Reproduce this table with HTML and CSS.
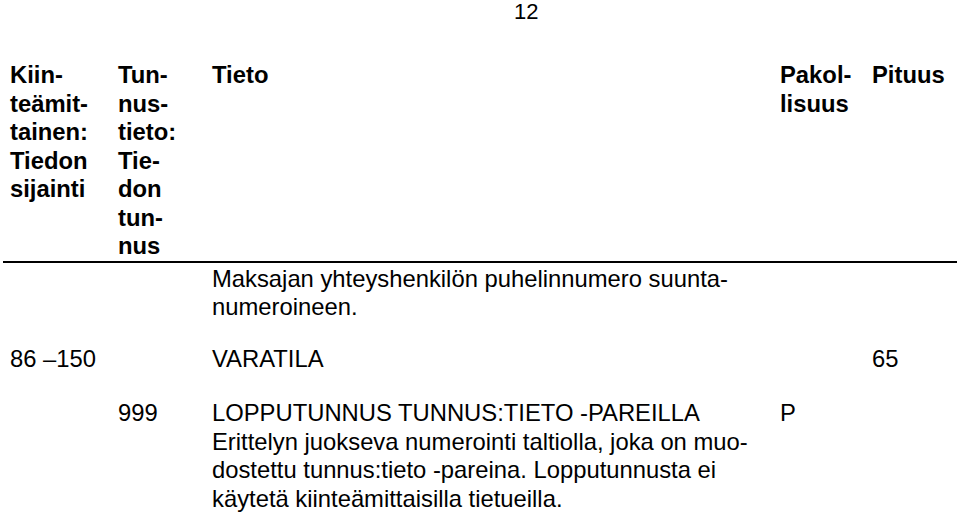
FILE: index.html
```html
<!DOCTYPE html>
<html lang="fi">
<head>
<meta charset="utf-8">
<title>Tietue</title>
<link rel="stylesheet" href="styles.css">
</head>
<body>
<div class="page">
  <div class="pagenum">12</div>
  <div class="table">
    <div class="row head">
      <div class="c1">Kiin-<br>teämit-<br>tainen:<br>Tiedon<br>sijainti</div>
      <div class="c2">Tun-<br>nus-<br>tieto:<br>Tie-<br>don<br>tun-<br>nus</div>
      <div class="c3">Tieto</div>
      <div class="c4">Pakol-<br>lisuus</div>
      <div class="c5">Pituus</div>
    </div>
    <div class="row r-desc">
      <div class="c1"></div>
      <div class="c2"></div>
      <div class="c3">Maksajan yhteyshenkilön puhelinnumero suunta-<br>numeroineen.</div>
      <div class="c4"></div>
      <div class="c5"></div>
    </div>
    <div class="row r-vara">
      <div class="c1">86 –150</div>
      <div class="c2"></div>
      <div class="c3">VARATILA</div>
      <div class="c4"></div>
      <div class="c5">65</div>
    </div>
    <div class="row r-end">
      <div class="c1"></div>
      <div class="c2">999</div>
      <div class="c3">LOPPUTUNNUS TUNNUS:TIETO -PAREILLA<br>Erittelyn juokseva numerointi taltiolla, joka on muo-<br>dostettu tunnus:tieto -pareina. Lopputunnusta ei<br>käytetä kiinteämittaisilla tietueilla.</div>
      <div class="c4">P</div>
      <div class="c5"></div>
    </div>
  </div>
</div>
</body>
</html>
```

FILE: styles.css
```css
html, body {
  margin: 0;
  padding: 0;
  background: #ffffff;
}

.page {
  width: 959px;
  height: 513px;
  overflow: hidden;
  font-family: "Liberation Sans", Arial, sans-serif;
  font-size: 23.8px;
  line-height: 28.5px;
  color: #000000;
}

.pagenum {
  font-size: 22px;
  line-height: 24px;
  padding-left: 514px;
}

.table {
  margin-top: 37px;
  margin-left: 3px;
  width: 954px;
}

.row {
  display: grid;
  grid-template-columns: 108px 94px 568px 92px 1fr;
  padding-left: 7px;
}

.head {
  font-weight: bold;
  border-bottom: 2px solid #000000;
}

.r-desc {
  padding-top: 2px;
}

.r-vara {
  padding-top: 23px;
}

.r-end {
  padding-top: 26px;
}
```
